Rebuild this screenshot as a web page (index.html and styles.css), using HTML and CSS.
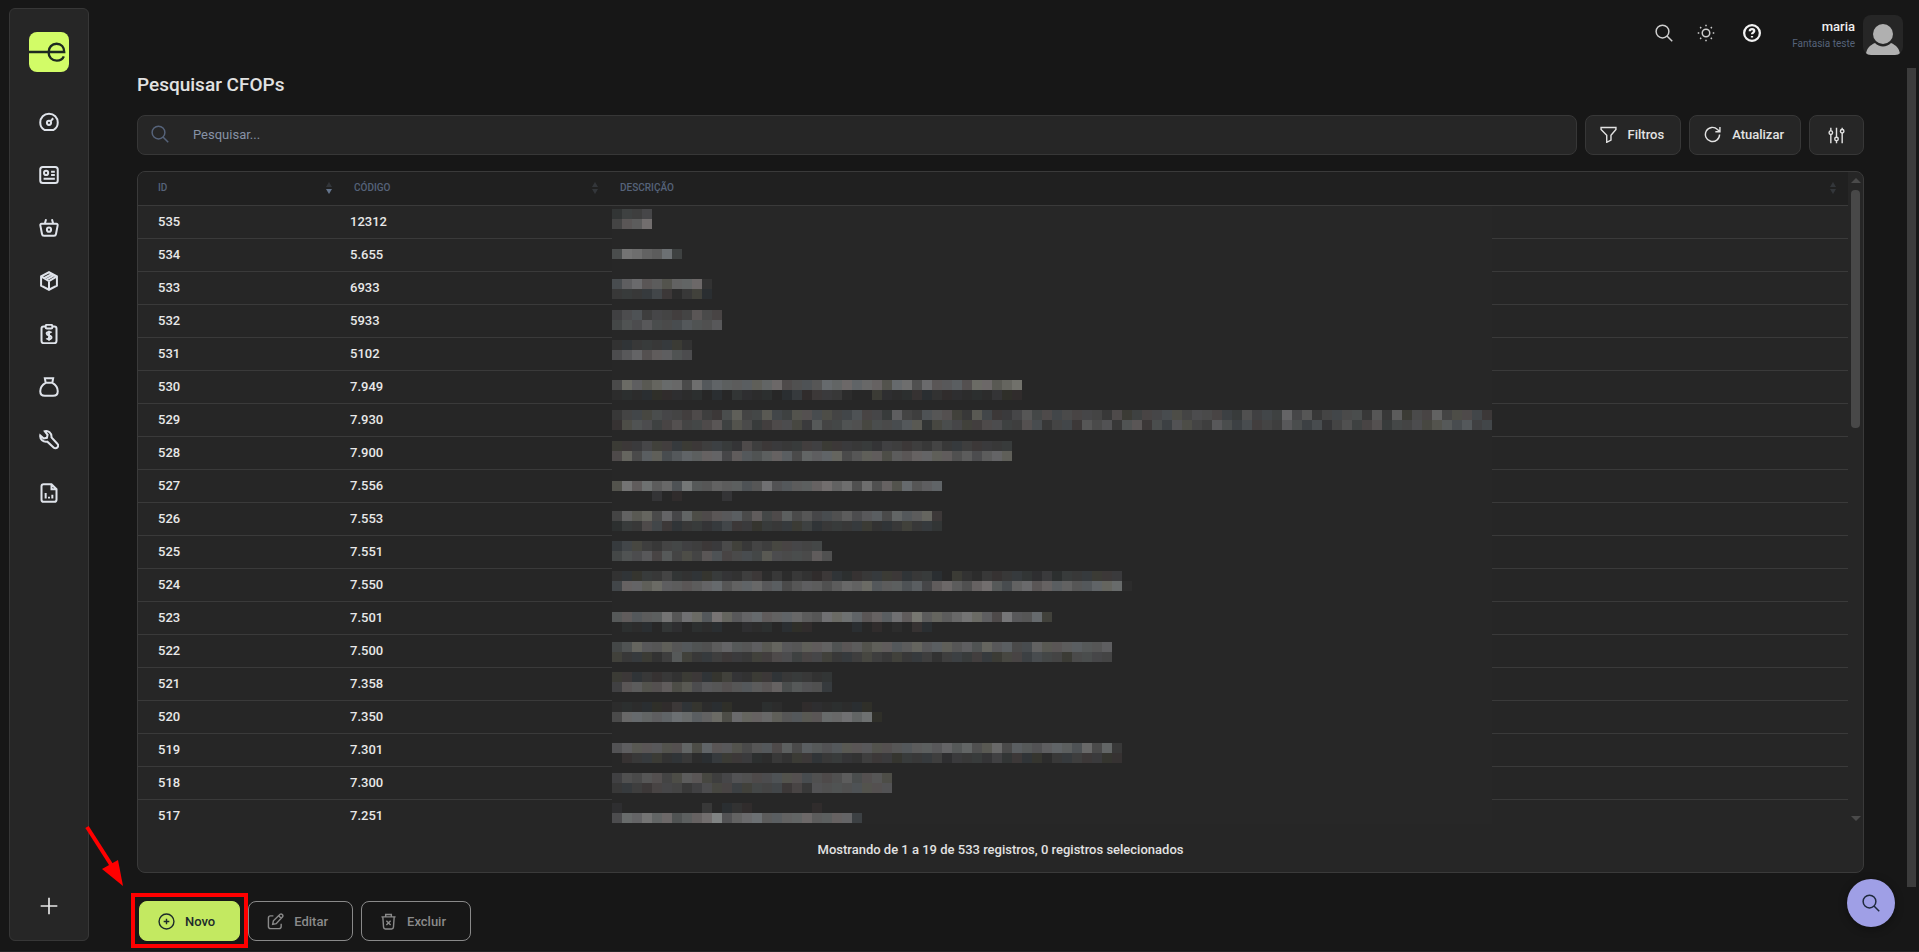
FILE: index.html
```
<!DOCTYPE html>
<html lang="pt-BR">
<head>
  <meta charset="utf-8">
  <title>Pesquisar CFOPs</title>
  <link rel="stylesheet" href="styles.css">
</head>
<body>
  <nav class="sidebar">
    <a href="#" class="logo" aria-label="Início">
      <svg viewBox="0 0 40 40" width="40" height="40" fill="none" stroke="#1d2a20" stroke-width="2.4">
        <path d="M0 20h35.200c0-5-3-8.200-7.600-8.200s-8 3.400-8 8.400 3.200 8.400 8.200 8.400c3.600 0 6-1.600 7-4.200"/>
      </svg>
    </a>
    <a href="#" class="nav-link" aria-label="Painel">
      <svg class="icon" viewBox="0 0 24 24"><path d="M6.500 21.500C3.500 20 1.500 16.500 1.500 12.700 1.500 6.500 6 2 12 2s10.500 4.500 10.500 10.700c0 3.800-2 7.300-5 8.800z"/><circle cx="12" cy="13" r="2.500"/><path d="m14 11 3-3.500"/></svg>
    </a>
    <a href="#" class="nav-link" aria-label="Cadastros">
      <svg class="icon" viewBox="0 0 24 24"><rect x="1.500" y="2.500" width="21" height="19" rx="3"/><circle cx="8.500" cy="9.500" r="2.500"/><path d="M14.500 8H19M14.500 12H19M5.500 16.500H19"/></svg>
    </a>
    <a href="#" class="nav-link" aria-label="Vendas">
      <svg class="icon" viewBox="0 0 24 24"><path d="M3 7h18c1 0 1.600.8 1.400 1.800l-2 10.400c-.2 1.400-1 2.100-2.400 2.100H6c-1.400 0-2.200-.7-2.400-2.100l-2-10.400C1.400 7.800 2 7 3 7zM8.500 1.500 7 6.500M15.500 1.500l1.500 5"/><circle cx="12" cy="14" r="2.500"/></svg>
    </a>
    <a href="#" class="nav-link" aria-label="Estoque">
      <svg class="icon" viewBox="0 0 24 24"><path d="m12 1.500 9.500 5v11L12 22.500l-9.500-5v-11zM2.500 6.500 12 12l9.500-5.500M12 12v10.500M6 8.700 15.700 3.500M9 10.400l9.500-5.500"/></svg>
    </a>
    <a href="#" class="nav-link" aria-label="Fiscal">
      <svg class="icon" viewBox="0 0 24 24"><path d="M8 3H5.500c-1.300 0-2.500 1-2.500 2.500v15C3 21.800 4 23 5.500 23h13c1.300 0 2.500-1 2.500-2.500v-15C21 4 20 3 18.500 3H16"/><rect x="8" y="1" width="8" height="4.500" rx="1.500"/><path d="M15 10.500c-.6-.8-1.700-1-3-1-1.500 0-2.800.6-2.800 2s1.200 1.800 2.800 2.200 3 .8 3 2.300-1.300 2.200-3 2.200c-1.300 0-2.500-.4-3-1.200M12 8v12"/></svg>
    </a>
    <a href="#" class="nav-link" aria-label="Financeiro">
      <svg class="icon" viewBox="0 0 24 24"><path d="M7 1.500h10L16 7H8zM8 7c-3.500 2-6.500 5.500-6.500 10 0 3.500 2 5.500 5.500 5.500h10c3.500 0 5.500-2 5.500-5.500 0-4.500-3-8-6.500-10z"/></svg>
    </a>
    <a href="#" class="nav-link" aria-label="Ferramentas">
      <svg class="icon" viewBox="0 0 24 24"><path d="M7 1.500c4-1 8.500 2 8 7.500l7 7.500c1.300 1.300 1.200 3.200 0 4.500s-3.200 1.300-4.500 0L10 14C5 15 .8 11 1.500 6.500l4.200 3.700 3.800-.8.800-3.600z"/></svg>
    </a>
    <a href="#" class="nav-link" aria-label="Relatórios">
      <svg class="icon" viewBox="0 0 24 24"><path d="M15 1.500H5.500C4 1.500 3 2.500 3 4v16c0 1.500 1 2.500 2.500 2.500h13c1.500 0 2.500-1 2.500-2.500V7.500zM15 1.500v6h6M8 12v6.500M12 16.500v2M16 14v4.500"/></svg>
    </a>
    <button class="nav-add" aria-label="Adicionar">
      <svg class="icon" viewBox="0 0 24 24"><path d="M12 2v20M2 12h20"/></svg>
    </button>
  </nav>

  <div class="page">
    <header class="topbar">
      <button class="top-btn" aria-label="Buscar"><svg class="icon" viewBox="0 0 24 24"><circle cx="10" cy="10" r="8.500"/><path d="m16 16 7 7"/></svg></button>
      <button class="top-btn" aria-label="Tema"><svg class="icon" viewBox="0 0 24 24"><circle cx="12" cy="12" r="5"/><path d="M12 1v2M12 21v2M1 12h2M21 12h2M4.200 4.200l1.400 1.400M18.400 18.400l1.400 1.400M4.200 19.800l1.400-1.400M18.400 5.600l1.400-1.400"/></svg></button>
      <button class="top-btn help" aria-label="Ajuda"><svg class="icon" viewBox="0 0 24 24"><circle cx="12" cy="12" r="10.500"/><path d="M9 9.500c0-1.600 1.200-2.700 3-2.700s3 1 3 2.500c0 2-3 2.200-3 4.400M12 16v2"/></svg></button>
      <div class="user">
        <span class="user-name">maria</span>
        <span class="user-company">Fantasia teste</span>
      </div>
      <svg class="avatar" viewBox="0 0 40 40" width="40" height="40"><circle cx="20" cy="19" r="10" fill="#b0b0b0"/><path d="M3 40c0-6 4-10 9-12 4 4.500 12 4.500 16 0 5 2 9 6 9 12z" fill="#b0b0b0"/></svg>
    </header>

    <main class="main">
      <h1 class="title">Pesquisar CFOPs</h1>

      <div class="toolbar">
        <label class="search">
          <svg class="icon" viewBox="0 0 24 24"><circle cx="10" cy="10" r="8.500"/><path d="m16 16 7 7"/></svg>
          <input type="text" placeholder="Pesquisar..." aria-label="Pesquisar">
        </label>
        <button class="tool-btn"><svg class="icon" viewBox="0 0 24 24"><path d="M1.500 2h21v3l-7 8v7l-6 3V13l-8-8z"/></svg>Filtros</button>
        <button class="tool-btn"><svg class="icon" viewBox="0 0 24 24"><path d="M22 12a10 10 0 1 1-3-7.200L22.500 8M22.500 1.500V8H16"/></svg>Atualizar</button>
        <button class="tool-btn config" aria-label="Configurar"><svg class="icon" viewBox="0 0 24 24"><path d="M4 1v4.500M4 10.500V23M12 1v13.500M12 19.500V23M20 1v2.500M20 8.500V23"/><circle cx="4" cy="8" r="2.500"/><circle cx="12" cy="17" r="2.500"/><circle cx="20" cy="6" r="2.500"/></svg></button>
      </div>

      <section class="card">
        <div class="table-area">
          <div class="table-scroll">
            <table>
              <thead>
                <tr>
                  <th class="col-id"><div class="th">ID<span class="sort desc"></span></div></th>
                  <th class="col-code"><div class="th">CÓDIGO<span class="sort"></span></div></th>
                  <th class="col-desc"><div class="th">DESCRIÇÃO<span class="sort"></span></div></th>
                </tr>
              </thead>
              <tbody>
                <tr><td>535</td><td>12312</td><td></td></tr>
                <tr><td>534</td><td>5.655</td><td></td></tr>
                <tr><td>533</td><td>6933</td><td></td></tr>
                <tr><td>532</td><td>5933</td><td></td></tr>
                <tr><td>531</td><td>5102</td><td></td></tr>
                <tr><td>530</td><td>7.949</td><td></td></tr>
                <tr><td>529</td><td>7.930</td><td></td></tr>
                <tr><td>528</td><td>7.900</td><td></td></tr>
                <tr><td>527</td><td>7.556</td><td></td></tr>
                <tr><td>526</td><td>7.553</td><td></td></tr>
                <tr><td>525</td><td>7.551</td><td></td></tr>
                <tr><td>524</td><td>7.550</td><td></td></tr>
                <tr><td>523</td><td>7.501</td><td></td></tr>
                <tr><td>522</td><td>7.500</td><td></td></tr>
                <tr><td>521</td><td>7.358</td><td></td></tr>
                <tr><td>520</td><td>7.350</td><td></td></tr>
                <tr><td>519</td><td>7.301</td><td></td></tr>
                <tr><td>518</td><td>7.300</td><td></td></tr>
                <tr><td>517</td><td>7.251</td><td></td></tr>
              </tbody>
            </table>
            <svg class="mosaic" id="mosaic" width="880" height="619" shape-rendering="crispEdges"></svg>
          </div>
          <div class="scrollbar">
            <span class="arrow-up"></span>
            <span class="thumb"></span>
            <span class="arrow-down"></span>
          </div>
        </div>
        <div class="card-footer">Mostrando de 1 a 19 de 533 registros, 0 registros selecionados</div>
      </section>

      <div class="actions">
        <div class="highlight">
          <button class="btn btn-primary"><svg class="icon" viewBox="0 0 24 24"><circle cx="12" cy="12" r="10.500"/><path d="M12 8v8M8 12h8"/></svg>Novo</button>
          <svg class="pointer" viewBox="0 0 40 64" width="40" height="64"><path d="M3 3 28 42" stroke="#f00" stroke-width="4"/><path d="M18 45 34 36 39 62z" fill="#f00"/></svg>
        </div>
        <button class="btn"><svg class="icon" viewBox="0 0 24 24"><path d="M9 4H5C3 4 2 5 2 7v12c0 2 1 3 3 3h12c2 0 3-1 3-3v-4M8 16l1-5L18.500 1.800c2-1.500 5 1.200 3.500 3.500L13 15zM16.500 4l3.500 3.500"/></svg>Editar</button>
        <button class="btn"><svg class="icon" viewBox="0 0 24 24"><path d="M2 5.500h20M8 5V2h8v3M4 6l1 14c.1 1.600 1 2.500 2.500 2.500h9c1.500 0 2.400-.9 2.500-2.500l1-14M9 11l6 6M15 11l-6 6"/></svg>Excluir</button>
      </div>
    </main>
  </div>

  <div class="page-scroll"></div>
  <button class="fab" aria-label="Pesquisa rápida"><svg class="icon" viewBox="0 0 24 24"><circle cx="10" cy="10" r="8.500"/><path d="m16 16 7 7"/></svg></button>
  <script src="mosaic.js"></script>
</body>
</html>
```
FILE: styles.css
```
* {
  box-sizing: border-box;
}
body {
  margin: 0;
  height: 100vh;
  display: flex;
  overflow: hidden;
  background: #171717;
  border-bottom: 1px solid #252525;
  color: #e2e2e2;
  font-family: Roboto, "Liberation Sans", sans-serif;
  font-size: 14px;
  font-weight: 500;
}
button {
  font: inherit;
  color: inherit;
  background: none;
  border: none;
  padding: 0;
  cursor: pointer;
}
.icon {
  width: 20px;
  height: 20px;
  fill: none;
  stroke: currentColor;
  stroke-width: 2;
  flex-shrink: 0;
}
.sidebar {
  width: 80px;
  margin: 8px 0 10px 9px;
  padding: 23px 0 24px;
  background: #262626;
  border: 1px solid #373737;
  border-radius: 6px;
  display: flex;
  flex-direction: column;
  align-items: center;
  flex-shrink: 0;
}
.logo {
  width: 40px;
  height: 40px;
  margin-bottom: 23px;
  background: #d2fc67;
  border-radius: 8px;
}
.nav-link {
  width: 53px;
  height: 53px;
  display: flex;
  align-items: center;
  justify-content: center;
  color: #dfe3ea;
}
.nav-link .icon {
  stroke-width: 2.4;
}
.nav-add {
  margin-top: auto;
  height: 20px;
  color: #e8e8e8;
}
.page {
  flex: 1;
  min-width: 0;
  display: flex;
  flex-direction: column;
  padding: 15px 16px 10px 48px;
}
.topbar {
  height: 40px;
  display: flex;
  justify-content: flex-end;
}
.top-btn {
  width: 42px;
  height: 36px;
  display: flex;
  align-items: center;
  justify-content: center;
  color: #cfcfcf;
}
.top-btn .icon {
  width: 18px;
  height: 18px;
}
.top-btn.help {
  width: 50px;
  color: #f2f2f2;
}
.help .icon {
  stroke-width: 3;
}
.user {
  display: flex;
  flex-direction: column;
  align-items: flex-end;
  padding-top: 3px;
  margin: 0 8px 0 15px;
}
.user-name {
  font-size: 13px;
  line-height: 18px;
  color: #efefef;
}
.user-company {
  font-size: 10px;
  font-weight: 400;
  line-height: 16px;
  color: #56637a;
}
.avatar {
  background: #262626;
  border-radius: 8px;
}
.main {
  flex: 1;
  min-height: 0;
  display: flex;
  flex-direction: column;
  padding: 16px 39px 0 0;
}
.title {
  margin: 0 0 16px;
  font-size: 19px;
  line-height: 28px;
  font-weight: 500;
}
.toolbar {
  display: flex;
  gap: 8px;
  margin-bottom: 16px;
}
.search {
  flex: 1;
  height: 40px;
  display: flex;
  align-items: center;
  gap: 22px;
  padding: 0 13px 2px;
  background: #262626;
  border: 1px solid #373737;
  border-radius: 8px;
  color: #56637a;
}
.search .icon {
  width: 18px;
  height: 18px;
}
.search input {
  flex: 1;
  background: none;
  border: none;
  outline: none;
  font: inherit;
  font-size: 13px;
  font-weight: 400;
  color: #e2e2e2;
}
.search input::placeholder {
  color: #8792a5;
}
.tool-btn {
  height: 40px;
  display: flex;
  align-items: center;
  gap: 11px;
  padding: 0 16px 1px 14px;
  background: #262626;
  border: 1px solid #373737;
  border-radius: 8px;
  font-size: 13px;
}
.tool-btn .icon {
  width: 17px;
  height: 17px;
}
.tool-btn.config {
  padding: 0 18px;
}
.card {
  flex: 1;
  min-height: 0;
  display: flex;
  flex-direction: column;
  background: #262626;
  border: 1px solid #3a3a3a;
  border-radius: 8px;
  overflow: hidden;
}
.table-area {
  flex: 1;
  min-height: 0;
  display: flex;
}
.table-scroll {
  flex: 1;
  overflow: hidden;
  position: relative;
}
table {
  width: 100%;
  border-collapse: separate;
  border-spacing: 0;
  table-layout: fixed;
}
th {
  height: 34px;
  padding: 0 4px 2px 16px;
  background: #202020;
  border-bottom: 1px solid #3a3a3a;
  font-size: 10px;
  font-weight: 500;
  color: #56637a;
  text-align: left;
}
.col-id {
  width: 200px;
  padding-left: 20px;
}
.col-code {
  width: 262px;
  padding-right: 0;
}
.col-desc {
  padding-left: 20px;
  padding-right: 10px;
}
.th {
  display: flex;
  justify-content: space-between;
  align-items: center;
}
.sort {
  width: 8px;
}
.sort::before,
.sort::after {
  content: "";
  display: block;
  width: 0;
  border: 3px solid transparent;
}
.sort::before {
  border-top: none;
  border-bottom: 5px solid #33363a;
  margin-bottom: 2px;
}
.sort::after {
  border-bottom: none;
  border-top: 5px solid #33363a;
}
.sort.desc::after {
  border-top-color: #64748b;
}
td {
  height: 33px;
  padding: 0 12px 2px;
  border-bottom: 1px solid #3a3a3a;
  font-size: 13px;
  color: #e8e8e8;
}
td:first-child {
  padding-left: 20px;
}
tr:last-child td {
  border-bottom: none;
}
.mosaic {
  position: absolute;
  top: 34px;
  left: 474px;
}
.scrollbar {
  width: 15px;
  display: flex;
  flex-direction: column;
  align-items: center;
  padding: 6px 0 3px;
}
.arrow-up,
.arrow-down {
  border: 5px solid transparent;
}
.arrow-up {
  border-top: none;
  border-bottom-color: #4a4a4a;
}
.arrow-down {
  border-bottom: none;
  border-top-color: #4a4a4a;
  margin-top: auto;
}
.thumb {
  width: 9px;
  height: 37%;
  margin-top: 7px;
  background: #484848;
  border-radius: 4px;
}
.card-footer {
  height: 48px;
  padding-top: 4px;
  line-height: 44px;
  text-align: center;
  font-size: 13px;
}
.actions {
  display: flex;
  gap: 8px;
  margin-top: 28px;
}
.btn {
  height: 40px;
  display: flex;
  align-items: center;
  gap: 10px;
  padding: 0 24px 0 18px;
  border: 1px solid #8a8a8a;
  border-radius: 8px;
  font-size: 13px;
  color: #8a8a8a;
}
.btn .icon {
  width: 17px;
  height: 17px;
}
.highlight {
  position: relative;
  padding-left: 2px;
}
.highlight::after {
  content: "";
  position: absolute;
  inset: -8px -8px -7px -6px;
  border: 4px solid #f00;
  pointer-events: none;
}
.btn-primary {
  background: #c3e961;
  border-color: #c3e961;
  color: #1d2b2b;
}
.pointer {
  position: absolute;
  left: -53px;
  top: -77px;
}
.page-scroll {
  position: fixed;
  top: 68px;
  right: 3px;
  bottom: 65px;
  width: 9px;
  background: #3c3c3c;
}
.fab {
  position: fixed;
  right: 24px;
  bottom: 25px;
  width: 48px;
  height: 48px;
  display: flex;
  align-items: center;
  justify-content: center;
  border-radius: 50%;
  background: #9f9fe6;
  color: #1f2a3d;
  box-shadow: 0 2px 8px rgba(0, 0, 0, 0.4);
}
.fab .icon {
  width: 18px;
  height: 18px;
}
```
FILE: mosaic.js
```
// Blocks that hide the descriptions. Each entry: top, then one string per
// line of blocks, one hex digit of brightness per 10px block.
const lines = [
  [3, "2445", "589c"],
  [43, "6dca9c4"],
  [73, "69b897aab2", "3333531341"],
  [104, "46745545865", "57686668778"],
  [134, "22333332", "68a79976"],
  [174, "6b98abb6c8a9999ab6778bababa7bc7b8897bb8ac", "11111111101021110131333100311121211111211"],
  [204, "3555655464369558547766557553954787438533585656555363455665665437454a58355663839365a56653", "2676457556847634665385577566688256544664476355386737836476548646454864625745735565786845"],
  [235, "3335443334432643333443333324434353343333", "6a69968a9aa59879a96a9aa6899698aa997969a9"],
  [275, "7d9c9b7d88a9978c7899acac7c7a7b89ac9b3", "0000201000020000"],
  [305, "5a8a6a5a66889695696856796896a89a3", "133653233235332333342333332234332"],
  [335, "355435544336435455555", "5768585658756658666697"],
  [365, "222335222232243131321321233332331032132332131333333", "5aa9b9989ab8aab89689979bab8997959b97ac86ab8a9a88aab1"],
  [406, "89899d8cb8da8ab9aab98cbca8a9c9d9a9bdb96d88b4", "01110210111001110111000010101021"],
  [436, "57a88988779a8898a8899a78979989a899897a8966a8899889", "43332484334333446645543345434334244343355465536655"],
  [466, "3323232332242233233322", "4897796868878898a68773"],
  [496, "11111132211100011001111111", "6bba9acb9ab6baab98888bbcac1"],
  [537, "7988877a6a88768869698788887788998a8a78b69879a97b6a3", "023332231133331132332332243323334133324232213343322"],
  [567, "4768756985457766777676796786", "3343555346554455535377777777"],
  [597, "100000000301210000001", "6badab79acf7abc99aab99aa4"]
];
const widths = [5, 7, 10, 11, 8, 41, 88, 40, 33, 33, 22, 52, 44, 50, 22, 27, 51, 28, 25];
const tints = [[0, 0, 0], [4, 0, 0], [0, 3, 3], [3, 3, -3], [0, 0, 0], [-2, 2, 5], [2, 2, 4]];

let out = '<rect width="880" height="619" fill="#272727"/>';
lines.forEach(([top, ...rows], n) => {
  rows.forEach((row, r) => {
    [...row].slice(0, widths[n]).forEach((digit, i) => {
      const level = parseInt(digit, 16);
      if (!level) return;
      const tint = tints[(i * 5 + n * 3 + r * 2 + level) % tints.length];
      const rgb = tint.map(t => 38 + level * 6 + t);
      out += `<rect x="${i * 10}" y="${top + r * 10}" width="10" height="10" fill="rgb(${rgb})"/>`;
    });
  });
});
document.getElementById("mosaic").innerHTML = out;
```
